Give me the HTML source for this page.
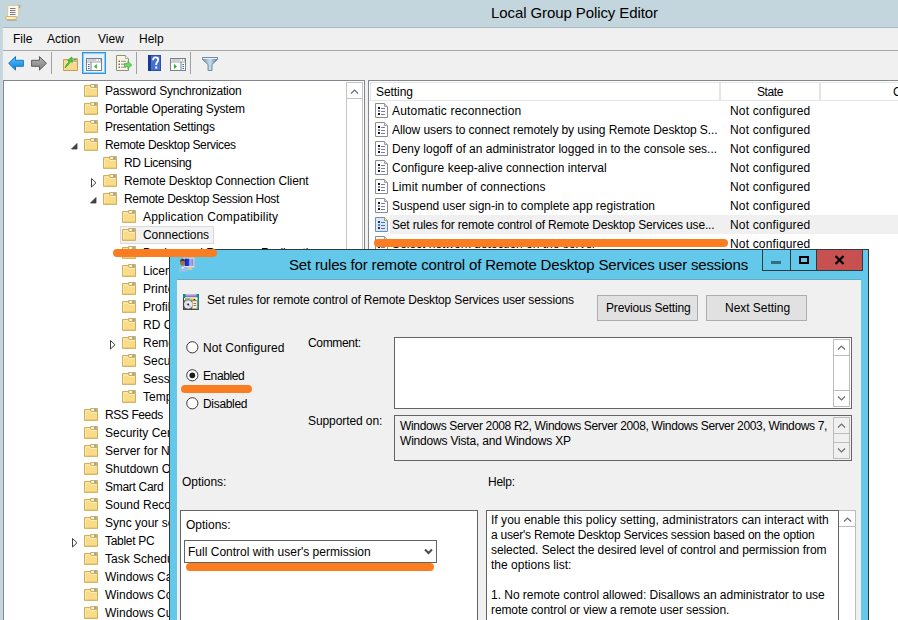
<!DOCTYPE html>
<html><head><meta charset="utf-8">
<style>
*{box-sizing:border-box;margin:0;padding:0}
html,body{width:898px;height:620px;overflow:hidden;background:#fff}
body{position:relative;font-family:"Liberation Sans",sans-serif;font-size:12px;color:#000}
.a{position:absolute;display:block}
.t{position:absolute;white-space:nowrap;line-height:14px;font-size:12px}
.sel{background:#f2f2f2;border:1px solid #dadada}
#tbar{left:0;top:0;width:898px;height:27px;background:#c4d6dd}
#tline{left:2px;top:27px;width:896px;height:1px;background:#a9b9c0}
#lframe{left:0;top:27px;width:2px;height:593px;background:#c4d6dd}
#lframe2{left:2px;top:27px;width:1px;height:593px;background:#c8d9df}
#menu{left:3px;top:28px;width:895px;height:22px;background:#f0f0f0}
#mline{left:3px;top:50px;width:895px;height:1px;background:#a8a8a8}
#mline2{left:3px;top:51px;width:895px;height:1px;background:#f8f8fc}
#toolbar{left:3px;top:51px;width:895px;height:29px;background:#f0f0f0}
#tree{left:3px;top:80px;width:362px;height:540px;background:#fff;border-top:1px solid #828790;border-left:1px solid #828790;border-right:1px solid #828790}
#split{left:365px;top:80px;width:3px;height:540px;background:#f0f0f0}
#list{left:368px;top:80px;width:530px;height:540px;background:#fff;border-top:1px solid #828790;border-left:1px solid #828790}
#dlg{left:169px;top:249px;width:700px;height:380px;background:#63c8e9;border:1px solid #2f3b40}
#dbody{left:177px;top:280px;width:684px;height:340px;background:#f0f0f0}
#dline{left:177px;top:279px;width:684px;height:1px;background:#6aa6c2}
.btn{position:absolute;background:#e1e1e1;border:1px solid #adadad;text-align:center;line-height:24px;font-size:12px}
.box{position:absolute;background:#fff;border:1px solid #646464}
.orange{position:absolute;background:#fb7d22;border-radius:4px}
</style></head><body>
<svg width="0" height="0" style="position:absolute">
<defs>
<symbol id="fd" viewBox="0 0 14 14">
 <path d="M0.5 1.5H6.5V3.5H13.5V12.5H0.5Z" fill="#f9dc88" stroke="#d0ae60"/>
 <path d="M6.5 0.5H13.5V3.5H6.5Z" fill="#f6d888" stroke="#d0ae60"/>
 <rect x="7.6" y="1.4" width="2.6" height="1.2" fill="#ffffff"/><rect x="10.2" y="1.4" width="2.4" height="1.2" fill="#2f88f2"/>
 <path d="M1.5 3H5.8L7 4.5H12.5" fill="none" stroke="#fdeebb"/>
 <path d="M1.5 4V11.5" stroke="#fce7a8"/>
 <path d="M1 12H13" stroke="#e0bc6c"/>
</symbol>
<symbol id="pi" viewBox="0 0 14 16">
 <path d="M0.5 0.5H9.5L12.5 3.5V14.5H0.5Z" fill="#fff" stroke="#8c8c8c"/>
 <path d="M9.5 0.5V3.5H12.5" fill="#ddd" stroke="#a0a0a0"/>
 <rect x="3" y="4" width="2" height="2" fill="#101020"/>
 <rect x="3" y="7" width="2" height="2" fill="#8080b0"/>
 <rect x="3" y="10" width="2" height="2" fill="#101020"/>
 <rect x="6" y="5" width="4" height="1" fill="#7a7aa8"/>
 <rect x="6" y="8" width="4" height="1" fill="#7a7aa8"/>
 <rect x="6" y="11" width="4" height="1" fill="#7a7aa8"/>
</symbol>
<symbol id="pis" viewBox="0 0 14 16">
 <path d="M0.5 0.5H9.5L12.5 3.5V14.5H0.5Z" fill="#d8e8f8" stroke="#7a8ca8"/>
 <path d="M9.5 0.5V3.5H12.5" fill="#f0f0a0" stroke="#a0a070"/>
 <rect x="3" y="4" width="2" height="2" fill="#203060"/>
 <rect x="3" y="7" width="2" height="2" fill="#6080c0"/>
 <rect x="3" y="10" width="2" height="2" fill="#203060"/>
 <rect x="6" y="5" width="4" height="1" fill="#5070b0"/>
 <rect x="6" y="8" width="4" height="1" fill="#5070b0"/>
 <rect x="6" y="11" width="4" height="1" fill="#5070b0"/>
</symbol>
</defs></svg>

<div class="a" id="tbar"></div>
<div class="a" id="tline"></div>
<div class="a" id="lframe"></div>
<div class="a" id="lframe2"></div>
<div class="t" style="letter-spacing:-0.094px;left:491px;top:4px;font-size:15px;line-height:18px">Local Group Policy Editor</div>
<div class="a" id="menu"></div>
<div class="a" id="mline"></div>
<div class="a" id="mline2"></div>
<div class="t" style="left:13px;top:32px">File</div>
<div class="t" style="left:47px;top:32px">Action</div>
<div class="t" style="left:98px;top:32px">View</div>
<div class="t" style="left:139px;top:32px">Help</div>
<div class="a" id="toolbar"></div>
<div class="a" id="tree"></div>
<div class="a" id="split"></div>
<div class="a" id="list"></div>
<!-- list header -->
<div class="a" style="left:370px;top:82px;width:528px;height:19px;border-top:1px solid #e5e5e5;border-left:1px solid #e5e5e5;border-bottom:1px solid #e5e5e5"></div>
<div class="t" style="letter-spacing:-0.064px;left:376px;top:85px">Setting</div>
<div class="a" style="left:719px;top:82px;width:2px;height:18px;background:#e5e5e5"></div>
<div class="a" style="left:819px;top:82px;width:2px;height:18px;background:#e5e5e5"></div>
<div class="a" style="left:369px;top:100px;width:529px;height:1px;background:#e5e5e5"></div>
<div class="t" style="letter-spacing:-0.400px;left:757px;top:85px">State</div>
<div class="t" style="left:893px;top:85px">C</div>
<!-- tree scrollbar -->
<div class="a" style="left:346px;top:82px;width:17px;height:540px;background:#fff;border-left:1px solid #c4c4c4;border-right:1px solid #c4c4c4"></div>
<div class="a" style="left:346px;top:82px;width:17px;height:17px;border:1px solid #c4c4c4;background:#fff"></div>
<svg class="a" style="left:350px;top:88px" width="9" height="7"><path d="M1 5.5L4.5 2L8 5.5" fill="none" stroke="#6c6c6c" stroke-width="1.2"/></svg>
<!-- title icon -->
<svg class="a" style="left:4px;top:4px" width="18" height="18" viewBox="0 0 18 18">
 <path d="M3.8 1.5H14.8L14.5 12.5H3.5Z" fill="#fdf8e2" stroke="#cfc6a8" stroke-width="0.8"/>
 <path d="M14.8 1.2C15.8 1.2 16.3 2 15.9 3.2L14.8 3.6" fill="#e8d088" stroke="#b09048" stroke-width="1"/>
 <rect x="6" y="4" width="5.5" height="1" fill="#7a7a98"/>
 <rect x="6" y="6" width="5.5" height="1" fill="#7a7a98"/>
 <rect x="6" y="8" width="5.5" height="1" fill="#7a7a98"/>
 <rect x="6" y="10" width="5.5" height="1" fill="#7a7a98"/>
 <rect x="1.5" y="12.5" width="11" height="3" rx="1.4" fill="#faeebc" stroke="#c8b070" stroke-width="0.9"/>
 <rect x="3" y="16" width="10" height="1" fill="#909090" opacity="0.5"/>
</svg>
<!-- toolbar -->
<svg class="a" style="left:8px;top:56px" width="16" height="15" viewBox="0 0 16 15">
 <defs><linearGradient id="gb" x1="0" y1="0" x2="0" y2="1"><stop offset="0" stop-color="#5cc4fa"/><stop offset="1" stop-color="#0a7fd8"/></linearGradient></defs>
 <path d="M0.6 7.3L7.5 0.6V4.3H15.4V10.3H7.5V14.1Z" fill="url(#gb)" stroke="#1a78c8" stroke-width="1" stroke-linejoin="round"/>
</svg>
<svg class="a" style="left:31px;top:56px" width="16" height="15" viewBox="0 0 16 15">
 <defs><linearGradient id="gg" x1="0" y1="0" x2="0" y2="1"><stop offset="0" stop-color="#b4b4b4"/><stop offset="1" stop-color="#808080"/></linearGradient></defs>
 <path d="M15.4 7.3L8.5 0.6V4.3H0.6V10.3H8.5V14.1Z" fill="url(#gg)" stroke="#5a5a5a" stroke-width="1" stroke-linejoin="round"/>
</svg>
<div class="a" style="left:51px;top:52px;width:1px;height:22px;background:#a0a0a0"></div>
<svg class="a" style="left:63px;top:56px" width="15" height="16" viewBox="0 0 15 16">
 <path d="M0.5 3.5H6.5V5H14.5V14.5H0.5Z" fill="#f7d98c" stroke="#c4a056"/>
 <path d="M7 2.5H14.5V5H7Z" fill="#f5d68a" stroke="#c4a056" stroke-width="0.8"/>
 <rect x="10.5" y="3" width="3" height="1.2" fill="#3c8ef0"/>
 <path d="M1.5 6.5H13.5" stroke="#fcebb8"/>
 <path d="M2.2 11.8C3.2 8.8 4.6 7 6.2 5.6L4.6 4.6L8.8 1L9.4 6.4L7.8 5.6C6.4 7.4 4.6 9.8 2.2 11.8Z" fill="#44d03a" stroke="#22a01c" stroke-width="0.7" stroke-linejoin="round"/>
</svg>
<div class="a" style="left:82px;top:52px;width:24px;height:22px;background:#e5f1fb;border:1px solid #2b97e2;box-shadow:inset 0 0 0 1px #92cbf2"></div>
<svg class="a" style="left:86px;top:58px" width="16" height="13" viewBox="0 0 16 13">
 <rect x="0.5" y="0.5" width="15" height="12" fill="#fff" stroke="#7c8088"/>
 <rect x="1.5" y="1.5" width="9" height="1" fill="#9aa0a8"/>
 <rect x="12" y="1.5" width="1" height="1" fill="#7c8088"/><rect x="14" y="1.5" width="1" height="1" fill="#7c8088"/>
 <rect x="1" y="3.5" width="14" height="1" fill="#9aa0a8"/>
 <rect x="4.5" y="4" width="1" height="9" fill="#7c8088"/>
 <rect x="2" y="6" width="1.6" height="1" fill="#2e6ad0"/><rect x="2" y="8" width="1.6" height="1" fill="#2e6ad0"/><rect x="2" y="10" width="1.6" height="1" fill="#2e6ad0"/>
 <path d="M8 8.5L10.8 6V11Z" fill="#2eb02e"/>
</svg>
<svg class="a" style="left:116px;top:55px" width="17" height="16" viewBox="0 0 17 16">
 <path d="M0.5 0.5H9.5L12.5 3.5V15.5H0.5Z" fill="#fcf6dc" stroke="#8c8c8c"/>
 <path d="M9.5 0.5V3.5H12.5" fill="#fff" stroke="#a8a8a8"/>
 <circle cx="3.2" cy="6.2" r="0.7" fill="#303030"/><circle cx="3.2" cy="9.2" r="0.7" fill="#303030"/><circle cx="3.2" cy="12.2" r="0.7" fill="#303030"/>
 <rect x="5" y="5.7" width="5" height="1" fill="#8c8cc0"/><rect x="5" y="8.7" width="5" height="1" fill="#8c8cc0"/><rect x="5" y="11.7" width="5" height="1" fill="#8c8cc0"/>
 <path d="M8.5 8.4H11.8V6.2L15.8 10L11.8 13.8V11.6H8.5Z" fill="#6ad860" stroke="#3cb034" stroke-width="0.7" stroke-linejoin="round"/>
</svg>
<div class="a" style="left:136px;top:52px;width:1px;height:22px;background:#a0a0a0"></div>
<svg class="a" style="left:148px;top:55px" width="13" height="16" viewBox="0 0 13 16">
 <rect x="0" y="0" width="13" height="16" fill="#2a4fb0"/>
 <rect x="0" y="0" width="3" height="16" fill="#1a3890"/>
 <rect x="3" y="1" width="9" height="14" fill="#4870d0"/>
 <path d="M5 5.2C5 3.2 6.2 2.4 7.6 2.4C9.2 2.4 10.2 3.3 10.2 4.8C10.2 6.8 8.2 7 8.2 9.2V10" fill="none" stroke="#fff" stroke-width="1.8"/>
 <rect x="7.2" y="11.5" width="2" height="2" fill="#fff"/>
</svg>
<svg class="a" style="left:170px;top:58px" width="16" height="13" viewBox="0 0 16 13">
 <rect x="0.5" y="0.5" width="15" height="12" fill="#fff" stroke="#7c8088"/>
 <rect x="1.5" y="1.5" width="9" height="1" fill="#9aa0a8"/>
 <rect x="12" y="1.5" width="1" height="1" fill="#7c8088"/><rect x="14" y="1.5" width="1" height="1" fill="#7c8088"/>
 <rect x="1" y="3.5" width="14" height="1" fill="#9aa0a8"/>
 <rect x="10.5" y="4" width="1" height="9" fill="#7c8088"/>
 <rect x="12.4" y="6" width="1.6" height="1" fill="#2e6ad0"/><rect x="12.4" y="8" width="1.6" height="1" fill="#2e6ad0"/><rect x="12.4" y="10" width="1.6" height="1" fill="#2e6ad0"/>
 <path d="M4 6V11L7 8.5Z" fill="#2eb02e"/>
</svg>
<div class="a" style="left:190px;top:52px;width:1px;height:22px;background:#a0a0a0"></div>
<svg class="a" style="left:202px;top:57px" width="16" height="14" viewBox="0 0 16 14">
 <defs><linearGradient id="gf" x1="0" y1="0" x2="1" y2="0"><stop offset="0" stop-color="#6a8ea8"/><stop offset="0.5" stop-color="#c8e0ee"/><stop offset="1" stop-color="#5a7c94"/></linearGradient></defs>
 <path d="M0.5 0.5H15.5V2.5L10 7.5V13.5H6V7.5L0.5 2.5Z" fill="url(#gf)" stroke="#5a7a90" stroke-width="0.8"/>
 <rect x="1" y="1" width="14" height="1" fill="#e8f4fa"/>
</svg>

<svg class="a fd" style="left:84px;top:84px" width="14" height="14"><use href="#fd"/></svg>
<div class="t" style="letter-spacing:-0.206px;left:105px;top:84px">Password Synchronization</div>
<svg class="a fd" style="left:84px;top:102px" width="14" height="14"><use href="#fd"/></svg>
<div class="t" style="letter-spacing:-0.170px;left:105px;top:102px">Portable Operating System</div>
<svg class="a fd" style="left:84px;top:120px" width="14" height="14"><use href="#fd"/></svg>
<div class="t" style="letter-spacing:-0.204px;left:105px;top:120px">Presentation Settings</div>
<svg class="a" style="left:71px;top:143px" width="7" height="7"><path d="M6 0.5V6H0.5z" fill="#404040" stroke="#404040" stroke-width="0.8" stroke-linejoin="round"/></svg>
<svg class="a fd" style="left:84px;top:138px" width="14" height="14"><use href="#fd"/></svg>
<div class="t" style="letter-spacing:-0.351px;left:105px;top:138px">Remote Desktop Services</div>
<svg class="a fd" style="left:103px;top:156px" width="14" height="14"><use href="#fd"/></svg>
<div class="t" style="letter-spacing:-0.336px;left:124px;top:156px">RD Licensing</div>
<svg class="a" style="left:91px;top:178px" width="6" height="10"><path d="M0.5 0.5L5 4.75L0.5 9z" fill="none" stroke="#404040"/></svg>
<svg class="a fd" style="left:103px;top:174px" width="14" height="14"><use href="#fd"/></svg>
<div class="t" style="letter-spacing:-0.090px;left:124px;top:174px">Remote Desktop Connection Client</div>
<svg class="a" style="left:90px;top:197px" width="7" height="7"><path d="M6 0.5V6H0.5z" fill="#404040" stroke="#404040" stroke-width="0.8" stroke-linejoin="round"/></svg>
<svg class="a fd" style="left:103px;top:192px" width="14" height="14"><use href="#fd"/></svg>
<div class="t" style="letter-spacing:-0.310px;left:124px;top:192px">Remote Desktop Session Host</div>
<svg class="a fd" style="left:122px;top:210px" width="14" height="14"><use href="#fd"/></svg>
<div class="t" style="letter-spacing:0.178px;left:143px;top:210px">Application Compatibility</div>
<div class="a sel" style="left:120px;top:226px;width:94px;height:18px"></div>
<svg class="a fd" style="left:122px;top:228px" width="14" height="14"><use href="#fd"/></svg>
<div class="t" style="letter-spacing:-0.071px;left:143px;top:228px">Connections</div>
<svg class="a fd" style="left:122px;top:246px" width="14" height="14"><use href="#fd"/></svg>
<div class="t" style="left:143px;top:246px">Device and Resource Redirection</div>
<svg class="a fd" style="left:122px;top:264px" width="14" height="14"><use href="#fd"/></svg>
<div class="t" style="left:143px;top:264px">Licensing</div>
<svg class="a fd" style="left:122px;top:282px" width="14" height="14"><use href="#fd"/></svg>
<div class="t" style="left:143px;top:282px">Printer Redirection</div>
<svg class="a fd" style="left:122px;top:300px" width="14" height="14"><use href="#fd"/></svg>
<div class="t" style="left:143px;top:300px">Profiles</div>
<svg class="a fd" style="left:122px;top:318px" width="14" height="14"><use href="#fd"/></svg>
<div class="t" style="left:143px;top:318px">RD Connection Broker</div>
<svg class="a" style="left:110px;top:340px" width="6" height="10"><path d="M0.5 0.5L5 4.75L0.5 9z" fill="none" stroke="#404040"/></svg>
<svg class="a fd" style="left:122px;top:336px" width="14" height="14"><use href="#fd"/></svg>
<div class="t" style="left:143px;top:336px">Remote Session Environment</div>
<svg class="a fd" style="left:122px;top:354px" width="14" height="14"><use href="#fd"/></svg>
<div class="t" style="left:143px;top:354px">Security</div>
<svg class="a fd" style="left:122px;top:372px" width="14" height="14"><use href="#fd"/></svg>
<div class="t" style="left:143px;top:372px">Session Time Limits</div>
<svg class="a fd" style="left:122px;top:390px" width="14" height="14"><use href="#fd"/></svg>
<div class="t" style="left:143px;top:390px">Temporary folders</div>
<svg class="a fd" style="left:84px;top:408px" width="14" height="14"><use href="#fd"/></svg>
<div class="t" style="letter-spacing:-0.400px;left:105px;top:408px">RSS Feeds</div>
<svg class="a fd" style="left:84px;top:426px" width="14" height="14"><use href="#fd"/></svg>
<div class="t" style="left:105px;top:426px">Security Center</div>
<svg class="a fd" style="left:84px;top:444px" width="14" height="14"><use href="#fd"/></svg>
<div class="t" style="left:105px;top:444px">Server for NIS</div>
<svg class="a fd" style="left:84px;top:462px" width="14" height="14"><use href="#fd"/></svg>
<div class="t" style="left:105px;top:462px">Shutdown Options</div>
<svg class="a fd" style="left:84px;top:480px" width="14" height="14"><use href="#fd"/></svg>
<div class="t" style="letter-spacing:-0.297px;left:105px;top:480px">Smart Card</div>
<svg class="a fd" style="left:84px;top:498px" width="14" height="14"><use href="#fd"/></svg>
<div class="t" style="left:105px;top:498px">Sound Recorder</div>
<svg class="a fd" style="left:84px;top:516px" width="14" height="14"><use href="#fd"/></svg>
<div class="t" style="left:105px;top:516px">Sync your settings</div>
<svg class="a" style="left:72px;top:538px" width="6" height="10"><path d="M0.5 0.5L5 4.75L0.5 9z" fill="none" stroke="#404040"/></svg>
<svg class="a fd" style="left:84px;top:534px" width="14" height="14"><use href="#fd"/></svg>
<div class="t" style="letter-spacing:-0.295px;left:105px;top:534px">Tablet PC</div>
<svg class="a fd" style="left:84px;top:552px" width="14" height="14"><use href="#fd"/></svg>
<div class="t" style="left:105px;top:552px">Task Scheduler</div>
<svg class="a fd" style="left:84px;top:570px" width="14" height="14"><use href="#fd"/></svg>
<div class="t" style="left:105px;top:570px">Windows Calendar</div>
<svg class="a fd" style="left:84px;top:588px" width="14" height="14"><use href="#fd"/></svg>
<div class="t" style="left:105px;top:588px">Windows Color System</div>
<svg class="a fd" style="left:84px;top:606px" width="14" height="14"><use href="#fd"/></svg>
<div class="t" style="left:105px;top:606px">Windows Customer Experience Improvement Program</div>
<svg class="a" style="left:375px;top:103px" width="14" height="16"><use href="#pi"/></svg>
<div class="t" style="letter-spacing:0.180px;left:392px;top:104px">Automatic reconnection</div>
<div class="t" style="letter-spacing:0.171px;left:730px;top:104px">Not configured</div>
<svg class="a" style="left:375px;top:122px" width="14" height="16"><use href="#pi"/></svg>
<div class="t" style="letter-spacing:-0.101px;left:392px;top:123px">Allow users to connect remotely by using Remote Desktop S...</div>
<div class="t" style="letter-spacing:0.171px;left:730px;top:123px">Not configured</div>
<svg class="a" style="left:375px;top:141px" width="14" height="16"><use href="#pi"/></svg>
<div class="t" style="letter-spacing:-0.004px;left:392px;top:142px">Deny logoff of an administrator logged in to the console ses...</div>
<div class="t" style="letter-spacing:0.171px;left:730px;top:142px">Not configured</div>
<svg class="a" style="left:375px;top:160px" width="14" height="16"><use href="#pi"/></svg>
<div class="t" style="letter-spacing:0.031px;left:392px;top:161px">Configure keep-alive connection interval</div>
<div class="t" style="letter-spacing:0.171px;left:730px;top:161px">Not configured</div>
<svg class="a" style="left:375px;top:179px" width="14" height="16"><use href="#pi"/></svg>
<div class="t" style="letter-spacing:0.132px;left:392px;top:180px">Limit number of connections</div>
<div class="t" style="letter-spacing:0.171px;left:730px;top:180px">Not configured</div>
<svg class="a" style="left:375px;top:198px" width="14" height="16"><use href="#pi"/></svg>
<div class="t" style="letter-spacing:-0.025px;left:392px;top:199px">Suspend user sign-in to complete app registration</div>
<div class="t" style="letter-spacing:0.171px;left:730px;top:199px">Not configured</div>
<div class="a" style="left:390px;top:215px;width:508px;height:19px;background:#f0f0f0"></div>
<svg class="a" style="left:375px;top:217px" width="14" height="16"><use href="#pis"/></svg>
<div class="t" style="letter-spacing:-0.167px;left:392px;top:218px">Set rules for remote control of Remote Desktop Services use...</div>
<div class="t" style="letter-spacing:0.171px;left:730px;top:218px">Not configured</div>
<svg class="a" style="left:375px;top:236px" width="14" height="16"><use href="#pi"/></svg>
<div class="t" style="left:392px;top:237px">Select network detection on the server</div>
<div class="t" style="letter-spacing:0.171px;left:730px;top:237px">Not configured</div>
<div class="a" id="dlg"></div>
<div class="a" id="dbody"></div>
<div class="a" id="dline"></div>
<div class="t" style="letter-spacing:-0.175px;left:289px;top:256px;font-size:15px;line-height:18px">Set rules for remote control of Remote Desktop Services user sessions</div>
<div class="btn" style="left:597px;top:295px;width:101px;height:26px"><span class="t" style="letter-spacing:-0.180px;left:8px;top:5px">Previous Setting</span></div>
<div class="btn" style="left:706px;top:295px;width:101px;height:26px"><span class="t" style="letter-spacing:-0.027px;left:18px;top:5px">Next Setting</span></div>
<div class="t" style="letter-spacing:-0.144px;left:207px;top:293px">Set rules for remote control of Remote Desktop Services user sessions</div>
<div class="t" style="letter-spacing:0.051px;left:203px;top:341px">Not Configured</div>
<div class="t" style="letter-spacing:-0.400px;left:203px;top:369px">Enabled</div>
<div class="t" style="letter-spacing:-0.317px;left:203px;top:397px">Disabled</div>
<div class="t" style="letter-spacing:-0.331px;left:308px;top:336px">Comment:</div>
<div class="box" style="left:394px;top:337px;width:458px;height:72px"></div>
<div class="t" style="letter-spacing:-0.088px;left:308px;top:414px">Supported on:</div>
<div class="box" style="left:394px;top:415px;width:458px;height:46px;background:#f0f0f0"></div>
<div class="t" style="letter-spacing:-0.340px;left:400px;top:419px">Windows Server 2008 R2, Windows Server 2008, Windows Server 2003, Windows 7,</div>
<div class="t" style="letter-spacing:-0.197px;left:400px;top:434px">Windows Vista, and Windows XP</div>
<div class="t" style="letter-spacing:-0.051px;left:182px;top:475px">Options:</div>
<div class="t" style="letter-spacing:-0.245px;left:488px;top:475px">Help:</div>
<div class="box" style="left:180px;top:510px;width:298px;height:120px"></div>
<div class="t" style="left:186px;top:518px">Options:</div>
<div class="box" style="left:184px;top:540px;width:253px;height:23px"></div>
<div class="t" style="letter-spacing:0.010px;left:188px;top:545px">Full Control with user's permission</div>
<div class="box" style="left:486px;top:510px;width:353px;height:120px"></div>
<div class="t" style="letter-spacing:0.033px;left:491px;top:513px">If you enable this policy setting, administrators can interact with</div>
<div class="t" style="letter-spacing:-0.217px;left:491px;top:528px">a user's Remote Desktop Services session based on the option</div>
<div class="t" style="letter-spacing:-0.073px;left:491px;top:543px">selected. Select the desired level of control and permission from</div>
<div class="t" style="letter-spacing:0.018px;left:491px;top:558px">the options list:</div>
<div class="t" style="letter-spacing:-0.029px;left:491px;top:588px">1. No remote control allowed: Disallows an administrator to use</div>
<div class="t" style="letter-spacing:-0.101px;left:491px;top:603px">remote control or view a remote user session.</div>

<!-- caption buttons -->
<div class="a" style="left:762px;top:250px;width:29px;height:21px;border:1px solid #2f3b40;border-top:none"></div>
<div class="a" style="left:771px;top:261px;width:10px;height:3px;background:#3a6c80"></div>
<div class="a" style="left:790px;top:250px;width:27px;height:21px;border-bottom:1px solid #2f3b40;border-right:1px solid #2f3b40"></div>
<div class="a" style="left:799px;top:256px;width:10px;height:8px;border:2px solid #000"></div>
<div class="a" style="left:816px;top:250px;width:47px;height:21px;background:#c75050;border:1px solid #2f3b40;border-top:none"></div>
<svg class="a" style="left:834px;top:255px" width="11" height="10" viewBox="0 0 11 10"><path d="M1.5 1L9.5 9M9.5 1L1.5 9" stroke="#000" stroke-width="2.2"/></svg>
<!-- dialog icons -->
<svg class="a" style="left:179px;top:257px" width="16" height="15" viewBox="0 0 16 15">
 <defs><linearGradient id="scr" x1="0" y1="0" x2="1" y2="0"><stop offset="0" stop-color="#0a1cc8"/><stop offset="0.45" stop-color="#2040e0"/><stop offset="0.6" stop-color="#a8b8f4"/><stop offset="1" stop-color="#7088e8"/></linearGradient></defs>
 <rect x="4.5" y="0.5" width="11" height="10" fill="#ece6d4" stroke="#c4bca4" stroke-width="0.8"/>
 <rect x="5.6" y="1.6" width="8.8" height="7.4" fill="url(#scr)"/>
 <path d="M9 10.5H12.5L13.5 13H8Z" fill="#d0c8b4"/>
 <ellipse cx="3.6" cy="5.4" rx="2.4" ry="3.2" fill="#a86e42"/>
 <path d="M1.2 4.6C1.2 2.4 2.4 1.8 3.6 1.8C5 1.8 6 2.6 6 4.2L5.4 4.4C4.6 3.6 2.8 3.6 1.8 4.8Z" fill="#3a3a3a"/>
 <path d="M0 14.8C0 11 1.4 9.2 3.8 9.2C6.2 9.2 7.8 11 7.8 14.8Z" fill="#9cc0e8"/>
 <path d="M2.5 10L3.8 12L5 10Z" fill="#f0f6ff"/>
</svg>
<svg class="a" style="left:183px;top:294px" width="16" height="16" viewBox="0 0 16 16">
 <defs><linearGradient id="lav" x1="0" y1="0" x2="0" y2="1"><stop offset="0" stop-color="#d0c8ec"/><stop offset="1" stop-color="#6a58a8"/></linearGradient></defs>
 <rect x="0.5" y="0.5" width="15" height="15" fill="#f4f4f4" stroke="#444"/>
 <rect x="1" y="0" width="14" height="3.5" fill="url(#lav)"/>
 <rect x="0" y="0" width="2.5" height="4" fill="#128a86"/><rect x="13.5" y="0" width="2.5" height="3" fill="#128a86"/>
 <rect x="14.6" y="3" width="1.4" height="13" fill="#128a86"/>
 <rect x="2" y="3.5" width="12" height="1" fill="#fff"/>
 <rect x="2" y="4.5" width="5.5" height="1.2" fill="#3c8c48"/><rect x="7.5" y="4.5" width="5" height="1.8" fill="#f4c018"/>
 <circle cx="11.5" cy="5.8" r="0.8" fill="#111"/>
 <rect x="1" y="6.3" width="13.6" height="9" fill="#5a5a5a"/>
 <circle cx="5.2" cy="10.6" r="4.1" fill="#e8eaf2"/>
 <path d="M5.2 10.6L2 8.4A4 4 0 0 1 4 6.7Z" fill="#c8f0c8"/>
 <path d="M5.2 10.6L8.6 12A4 4 0 0 1 6.8 14.3Z" fill="#c8ccf8"/>
 <path d="M5.2 10.6L1.3 11.2A4 4 0 0 1 1.6 9Z" fill="#f8c8e0"/>
 <circle cx="5.2" cy="10.6" r="1" fill="#2a2a2a"/>
 <rect x="9.4" y="7" width="4.6" height="7.6" fill="#fdf4cc" stroke="#c8b27c" stroke-width="0.6"/>
 <rect x="10.4" y="9" width="2.6" height="0.9" fill="#6c6c90"/><rect x="10.4" y="11" width="2.6" height="0.9" fill="#6c6c90"/>
</svg>
<!-- radios -->
<svg class="a" style="left:186px;top:341px" width="13" height="13" viewBox="0 0 13 13"><circle cx="6.3" cy="6.3" r="5.6" fill="#fff" stroke="#383838" stroke-width="1"/></svg>
<svg class="a" style="left:186px;top:369px" width="13" height="13" viewBox="0 0 13 13"><circle cx="6.3" cy="6.3" r="5.6" fill="#fff" stroke="#383838" stroke-width="1"/><circle cx="6.3" cy="6.3" r="2.9" fill="#1c1c1c"/></svg>
<svg class="a" style="left:186px;top:397px" width="13" height="13" viewBox="0 0 13 13"><circle cx="6.3" cy="6.3" r="5.6" fill="#fff" stroke="#383838" stroke-width="1"/></svg>
<!-- comment scrollbar -->
<div class="a" style="left:833px;top:339px;width:17px;height:68px;background:#fff;border:1px solid #bcbcbc"></div>
<div class="a" style="left:833px;top:355px;width:17px;height:1px;background:#bcbcbc"></div>
<div class="a" style="left:833px;top:390px;width:17px;height:1px;background:#bcbcbc"></div>
<svg class="a" style="left:837px;top:344px" width="9" height="7"><path d="M1 5.5L4.5 2L8 5.5" fill="none" stroke="#6c6c6c" stroke-width="1.2"/></svg>
<svg class="a" style="left:837px;top:395px" width="9" height="7"><path d="M1 1.5L4.5 5L8 1.5" fill="none" stroke="#6c6c6c" stroke-width="1.2"/></svg>
<!-- supported scrollbar -->
<div class="a" style="left:833px;top:417px;width:17px;height:42px;background:#f0f0f0;border:1px solid #bcbcbc"></div>
<div class="a" style="left:833px;top:433px;width:17px;height:1px;background:#bcbcbc"></div>
<div class="a" style="left:833px;top:442px;width:17px;height:1px;background:#bcbcbc"></div>
<svg class="a" style="left:837px;top:422px" width="9" height="7"><path d="M1 5.5L4.5 2L8 5.5" fill="none" stroke="#6c6c6c" stroke-width="1.2"/></svg>
<svg class="a" style="left:837px;top:447px" width="9" height="7"><path d="M1 1.5L4.5 5L8 1.5" fill="none" stroke="#6c6c6c" stroke-width="1.2"/></svg>
<!-- help scrollbar -->
<div class="a" style="left:839px;top:510px;width:17px;height:120px;background:#fff;border:1px solid #bcbcbc;border-left:none"></div>
<div class="a" style="left:839px;top:526px;width:17px;height:1px;background:#bcbcbc"></div>
<svg class="a" style="left:843px;top:516px" width="9" height="7"><path d="M1 5.5L4.5 2L8 5.5" fill="none" stroke="#6c6c6c" stroke-width="1.2"/></svg>
<!-- dropdown chevron -->
<svg class="a" style="left:424px;top:548px" width="9" height="8"><path d="M1 1.5L4.5 5L8 1.5" fill="none" stroke="#4a4a4a" stroke-width="2"/></svg>
<!-- orange annotation -->
<div class="orange" style="left:113px;top:249px;width:104px;height:8px"></div>
<div class="orange" style="left:374px;top:239px;width:354px;height:8px"></div>
<div class="orange" style="left:181px;top:385px;width:71px;height:8px"></div>
<div class="orange" style="left:186px;top:563px;width:248px;height:8px"></div>

</body></html>
